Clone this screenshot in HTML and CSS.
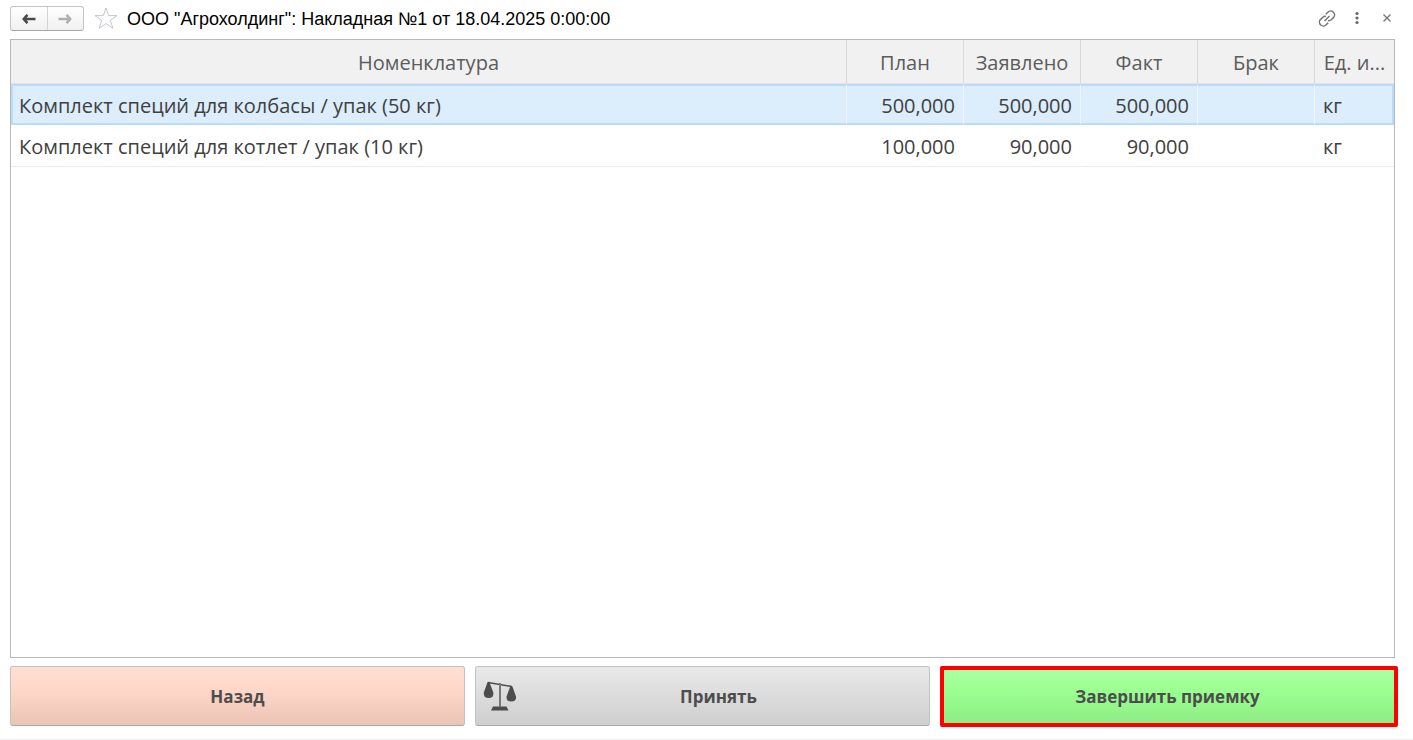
FILE: index.html
```html
<!DOCTYPE html>
<html lang="ru">
<head>
<meta charset="utf-8">
<title>Накладная №1</title>
<link rel="stylesheet" href="styles.css">
</head>
<body>
<div class="window">
  <header class="titlebar">
    <div class="nav">
      <button class="nav-btn" aria-label="Назад по истории"><svg width="14" height="10" viewBox="0 0 14 10"><path d="M5.500 .8 1.800 5 5.500 9.200M1.500 5H13.500" fill="none" stroke="#4a4a4a" stroke-width="2.600"/></svg></button>
      <button class="nav-btn" aria-label="Вперёд по истории"><svg width="14" height="10" viewBox="0 0 14 10"><path d="M8.500 .8 12.200 5 8.500 9.200M12.500 5H.5" fill="none" stroke="#b0b0b0" stroke-width="2.600"/></svg></button>
    </div>
    <button class="icon-btn star" aria-label="В избранное"><svg width="24" height="23" viewBox="0 0 24 23"><path d="M12 1 14.700 8.600H23L16.400 13.400 18.900 21.300 12 16.500 5.100 21.300 7.600 13.400 1 8.600H9.300Z" fill="#fff" stroke="#c3c7cc"/></svg></button>
    <h1 class="title">ООО "Агрохолдинг": Накладная №1 от 18.04.2025 0:00:00</h1>
    <div class="tools">
      <button class="icon-btn" aria-label="Ссылка"><svg width="18" height="18" viewBox="0 0 18 18" fill="none" stroke="#777" stroke-width="1.500"><path d="M7.800 4.300 9.800 2.300A3.600 3.600 0 0 1 15.600 7.400L13.200 9.800A3.500 3.500 0 0 1 10 10.600M10.200 12.700 8.200 14.700A3.600 3.600 0 0 1 2.400 9.600L4.800 7.200A3.500 3.500 0 0 1 8 6.400M6.500 11 11.500 6"/></svg></button>
      <button class="icon-btn" aria-label="Ещё"><svg width="18" height="18" viewBox="0 0 18 18" fill="#666"><circle cx="9" cy="3.500" r="1.600"/><circle cx="9" cy="8" r="1.600"/><circle cx="9" cy="12.500" r="1.600"/></svg></button>
      <button class="icon-btn" aria-label="Закрыть"><svg width="18" height="18" viewBox="0 0 18 18"><path d="M5.500 4.500 12.500 11.500M12.500 4.500 5.500 11.500" stroke="#777" stroke-width="1.400"/></svg></button>
    </div>
  </header>

  <main class="grid-frame">
    <table class="items">
      <colgroup><col><col class="c-num"><col class="c-num"><col class="c-num"><col class="c-num"><col class="c-unit"></colgroup>
      <thead>
        <tr><th>Номенклатура</th><th>План</th><th>Заявлено</th><th>Факт</th><th>Брак</th><th>Ед. и...</th></tr>
      </thead>
      <tbody>
        <tr class="selected"><td>Комплект специй для колбасы / упак (50 кг)</td><td class="num">500,000</td><td class="num">500,000</td><td class="num">500,000</td><td class="num"></td><td>кг</td></tr>
        <tr><td>Комплект специй для котлет / упак (10 кг)</td><td class="num">100,000</td><td class="num">90,000</td><td class="num">90,000</td><td class="num"></td><td>кг</td></tr>
      </tbody>
    </table>
  </main>

  <footer class="actions">
    <button class="btn back">Назад</button>
    <button class="btn accept"><svg class="scales" width="34" height="32" viewBox="0 0 34 32"><g fill="#4d4d4d"><path d="M4.600 2H6.400L10.300 12.500Q11 18 5.700 18 .3 18 .8 12.500Z"/><path d="M27.400 6H29.200L33 16.500Q33.600 21.500 28.300 21.500 23 21.500 23.600 16.500Z"/><path d="M10 26.500H23.500L25.500 30.500H8Z"/></g><path d="M5 2.500 28.500 6.500" stroke="#4d4d4d" stroke-width="1.600"/><path d="M17 3V27" stroke="#777" stroke-width="2"/></svg>Принять</button>
    <button class="btn finish">Завершить приемку</button>
  </footer>
</div>
</body>
</html>
```
FILE: styles.css
```css
* { box-sizing: border-box; }
body {
  margin: 0;
  background: #fff;
  font-family: "Open Sans", "Noto Sans", sans-serif;
  color: #404040;
}
button { font: inherit; color: inherit; padding: 0; cursor: pointer; }
svg { display: block; }

.window {
  display: flex;
  flex-direction: column;
  min-height: 100vh;
  padding: 0 18px 13px 10px;
  border-bottom: 1px solid #f1f1f1;
}

.titlebar { display: flex; align-items: center; height: 39px; padding-bottom: 2px; }
.nav {
  display: flex;
  width: 74px;
  height: 25px;
  border: 1px solid #c4c4c4;
  border-bottom-color: #a8a8a8;
  border-radius: 3px;
  background: linear-gradient(#fff, #f0f0f0);
}
.nav-btn {
  flex: 1;
  display: flex;
  align-items: center;
  justify-content: center;
  border: 0;
  background: none;
}
.nav-btn + .nav-btn { border-left: 1px solid #d4d4d4; }
.icon-btn { border: 0; background: none; }
.star { margin-left: 10px; }
.title {
  margin: 0 0 0 9px;
  font: 400 18px/24px "Liberation Sans", Arial, sans-serif;
  color: #000;
}
.tools { display: flex; gap: 12px; margin: 0 -1px 0 auto; }

.grid-frame { flex: 1; border: 1px solid #b8b8b8; }
.items {
  width: 100%;
  table-layout: fixed;
  border-collapse: separate;
  border-spacing: 0;
  font-size: 20px;
  line-height: 28px;
}
.c-num { width: 117px; }
.c-unit { width: 80px; }
.items th {
  height: 44px;
  padding: 2px 7px 0;
  font-weight: 400;
  color: #5c5c5c;
  background: #f1f1f1;
  border-bottom: 1px solid #e2e2e2;
  white-space: nowrap;
}
.items th + th { border-left: 1px solid #dadada; }
.items td {
  height: 42px;
  padding: 3px 8px 0;
  border-bottom: 1px solid #ebebeb;
  white-space: nowrap;
}
.items td + td { border-left: 1px solid #fff; }
.items .num { text-align: right; }
.items .selected td {
  height: 41px;
  padding-top: 2px;
  background: #dcedfc;
  border-top: 2px solid #b9dcfb;
  border-bottom: 2px solid #b9dcfb;
}
.items .selected td + td { border-left-color: #eef6fd; }
.items .selected td:first-child { border-left: 2px solid #b9dcfb; padding-left: 6px; }
.items .selected td:last-child { border-right: 2px solid #b9dcfb; }

.actions {
  display: grid;
  grid-template-columns: repeat(3, 1fr);
  gap: 10px;
  padding-top: 8px;
}
.btn {
  position: relative;
  height: 60px;
  border: 1px solid #c2c2c2;
  border-bottom-color: #aaa;
  border-radius: 3px;
  font-size: 17px;
  font-weight: 700;
  color: #4d4d4d;
}
.back { background: linear-gradient(#ffdfd3, #fed7c9 40%, #ebc4b5); }
.accept { padding-left: 32px; background: linear-gradient(#e9e9e9, #dfdfdf 40%, #cecece); }
.finish { background: linear-gradient(#adffa4, #9bff91 40%, #8dec84); }
.scales { position: absolute; left: 7px; top: 13px; }
.finish::after {
  content: "";
  position: absolute;
  inset: -1px -4px -2px -1px;
  border: 4px solid #ff0000;
  border-radius: 2px;
}
```
